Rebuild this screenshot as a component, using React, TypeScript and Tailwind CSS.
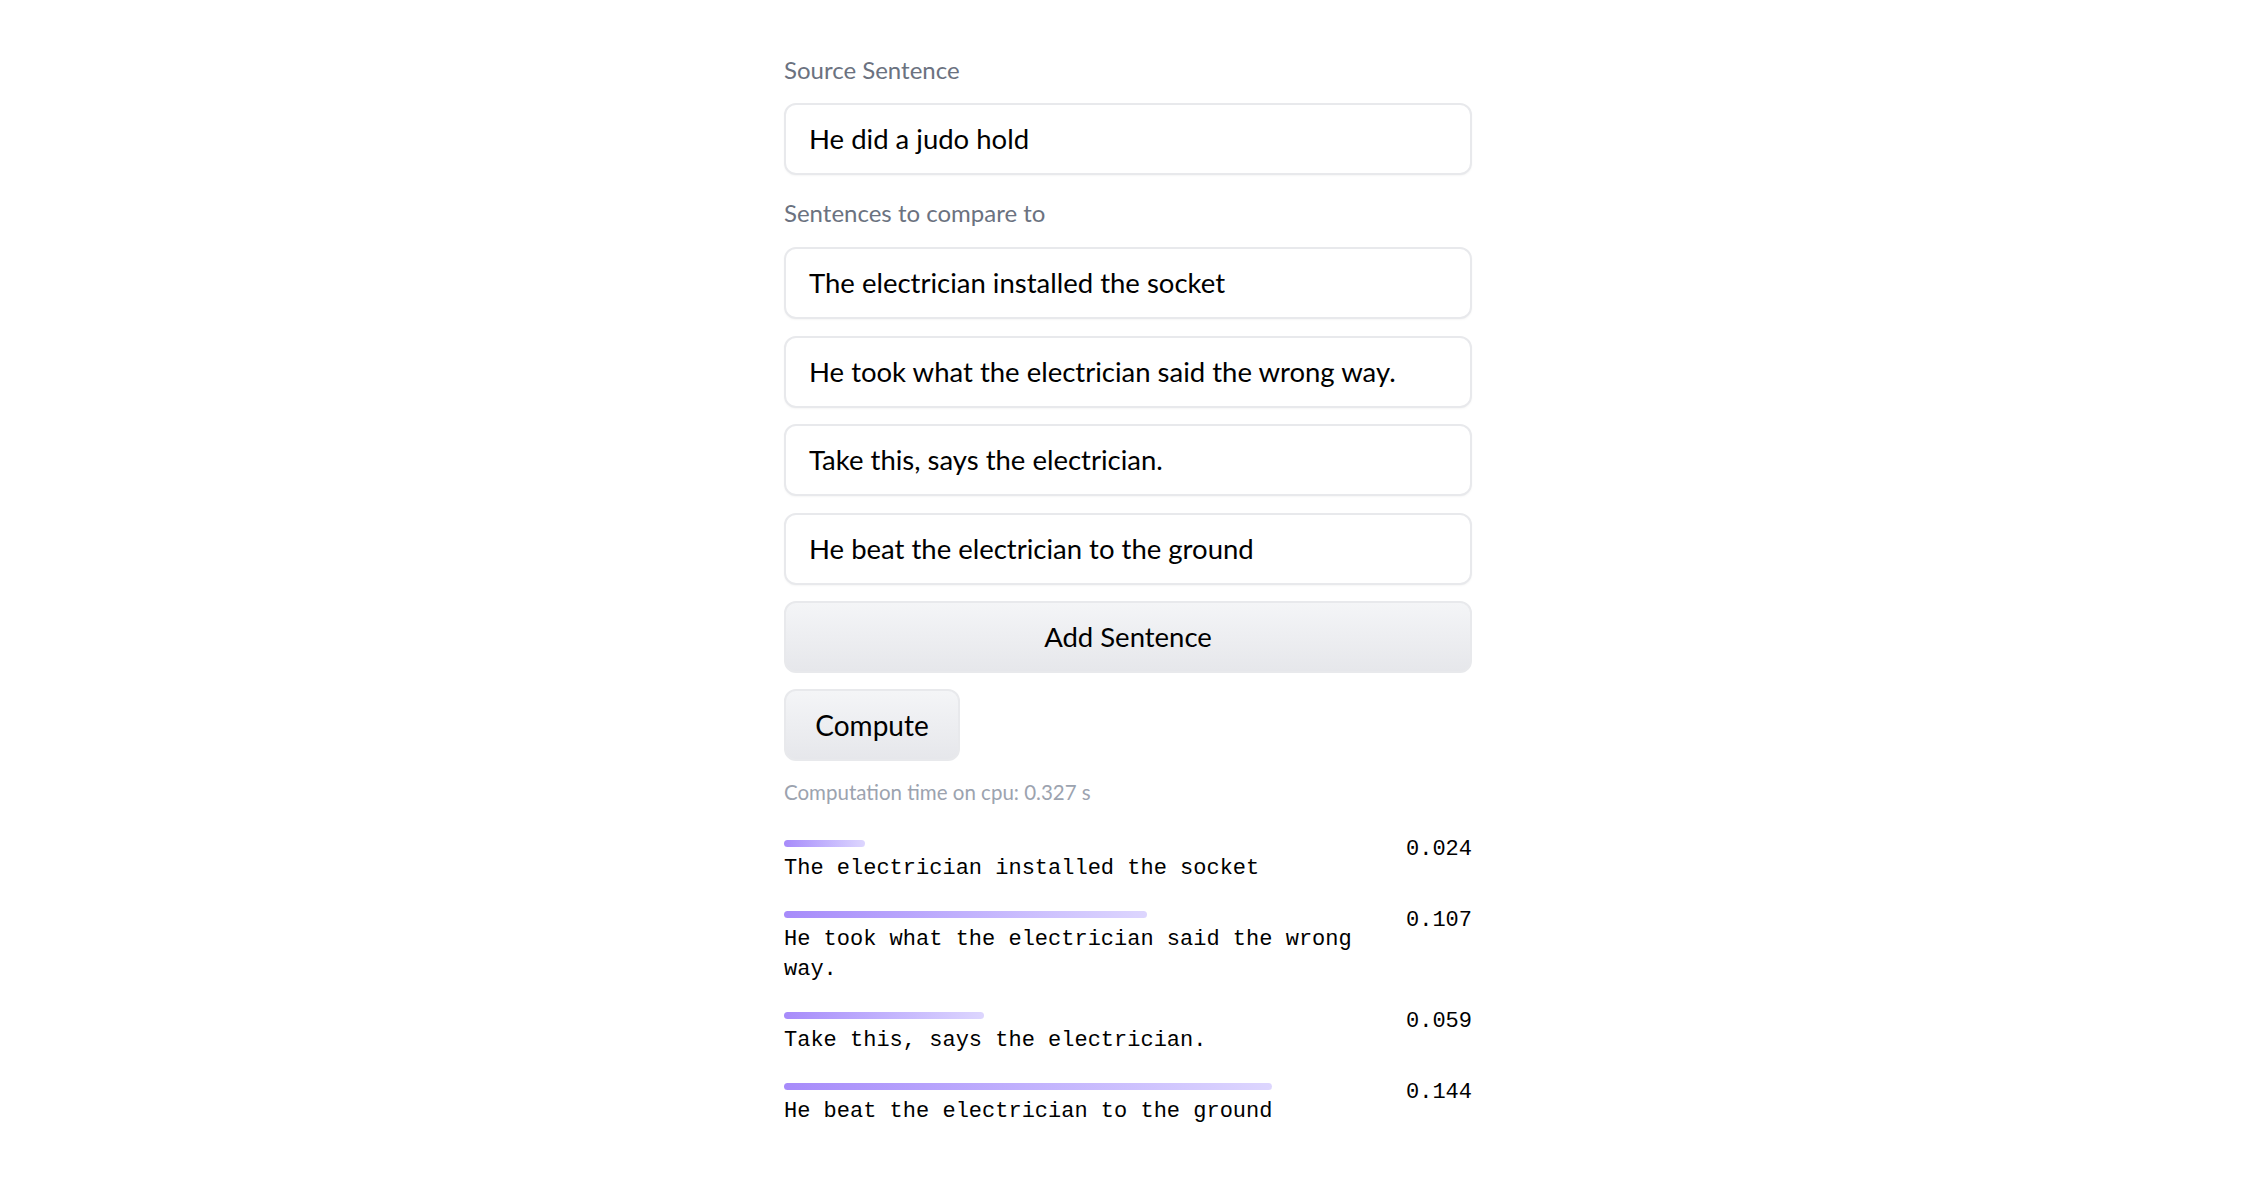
const sentences = [
  "The electrician installed the socket",
  "He took what the electrician said the wrong way.",
  "Take this, says the electrician.",
  "He beat the electrician to the ground",
];

const scores = [
  { text: "The electrician installed the socket", value: 0.024 },
  { text: "He took what the electrician said the wrong way.", value: 0.107 },
  { text: "Take this, says the electrician.", value: 0.059 },
  { text: "He beat the electrician to the ground", value: 0.144 },
];

const sans = "font-['Lato','Open_Sans',sans-serif]";

function Field({ value }: { value: string }) {
  return (
    <div className="flex h-[72px] items-center rounded-[12px] border-2 border-[#e8e9ec] bg-white px-[23px] text-[27.5px] text-black shadow-[0_1px_2px_rgba(0,0,0,0.04)]">
      {value}
    </div>
  );
}

function Label({ children }: { children: string }) {
  return <div className="text-[24px] leading-[28px] text-[#6b7280]">{children}</div>;
}

export default function App() {
  return (
    <div className={`min-h-screen bg-white ${sans}`}>
      <div className="mx-auto flex w-[688px] flex-col pt-[56px]">
        <Label>Source Sentence</Label>
        <div className="mt-[19px]">
          <Field value="He did a judo hold" />
        </div>

        <div className="mt-[24px]">
          <Label>Sentences to compare to</Label>
        </div>
        <div className="mt-[20px] flex flex-col gap-[16.5px]">
          {sentences.map((s) => (
            <Field key={s} value={s} />
          ))}
          <button className="h-[72px] w-full rounded-[12px] border-2 border-[#e8e9ec] bg-gradient-to-b from-[#f4f5f7] to-[#e6e7eb] text-[27.5px] text-black">
            Add Sentence
          </button>
        </div>

        <button className="mt-[16px] h-[72px] w-[176px] rounded-[12px] border-2 border-[#e8e9ec] bg-gradient-to-b from-[#f4f5f7] to-[#e6e7eb] text-[28px] text-black">
          Compute
        </button>

        <div className="mt-[17px] text-[20.5px] leading-[28px] text-[#9ca3af]">
          Computation time on cpu: 0.327 s
        </div>

        <div className="mt-[29px] flex flex-col gap-[22px] font-['Liberation_Mono','DejaVu_Sans_Mono',monospace] text-[22px] text-black">
          {scores.map((r) => (
            <div key={r.text} className="flex items-start justify-between">
              <div className="w-[610px]">
                <div
                  className="mt-[5px] h-[7px] rounded-full bg-gradient-to-r from-[#a78bfa] to-[#ddd6fe]"
                  style={{ width: `${r.value * 3390}px` }}
                />
                <div className="mt-[7px] leading-[30px]">{r.text}</div>
              </div>
              <div className="leading-[30px]">{r.value.toFixed(3)}</div>
            </div>
          ))}
        </div>
      </div>
    </div>
  );
}
